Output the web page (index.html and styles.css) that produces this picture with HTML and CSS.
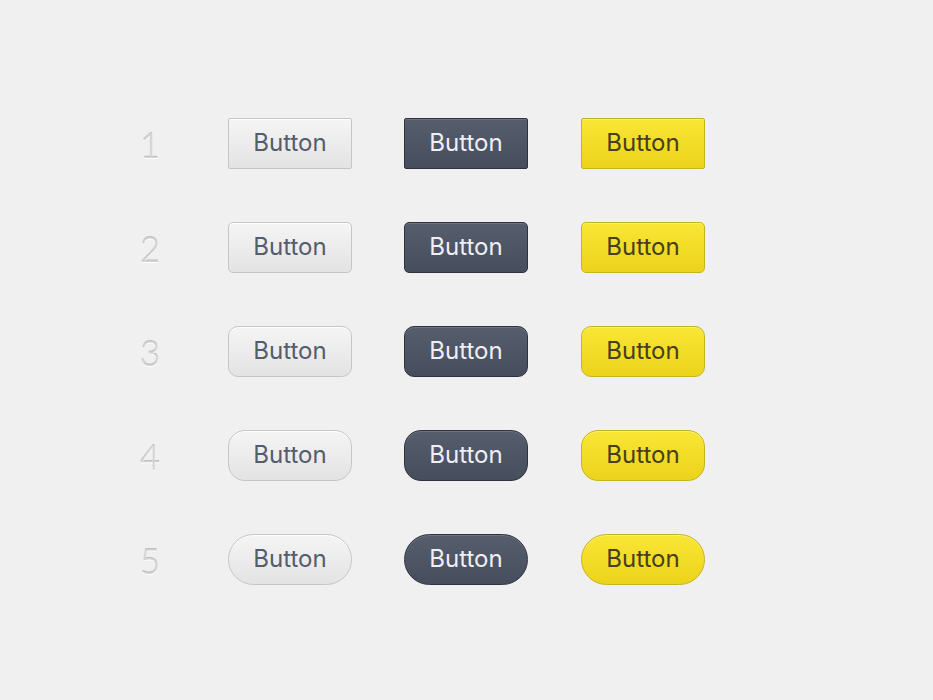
FILE: index.html
```html
<!DOCTYPE html>
<html lang="en">
<head>
    <meta charset="UTF-8">
    <title>Button Styles</title>
    <link rel="stylesheet" href="styles.css">
</head>
<body>

<div class="board">
    <div class="row r1">
        <span class="num">1</span>
        <button class="btn light">Button</button>
        <button class="btn dark">Button</button>
        <button class="btn yellow">Button</button>
    </div>
    <div class="row r2">
        <span class="num">2</span>
        <button class="btn light">Button</button>
        <button class="btn dark">Button</button>
        <button class="btn yellow">Button</button>
    </div>
    <div class="row r3">
        <span class="num">3</span>
        <button class="btn light">Button</button>
        <button class="btn dark">Button</button>
        <button class="btn yellow">Button</button>
    </div>
    <div class="row r4">
        <span class="num">4</span>
        <button class="btn light">Button</button>
        <button class="btn dark">Button</button>
        <button class="btn yellow">Button</button>
    </div>
    <div class="row r5">
        <span class="num">5</span>
        <button class="btn light">Button</button>
        <button class="btn dark">Button</button>
        <button class="btn yellow">Button</button>
    </div>
</div>

</body>
</html>
```

FILE: styles.css
```css
body, html {
    margin: 0;
    padding: 0;
    background: #f0f0f0;
    font-family: 'Inter', 'Open Sans', sans-serif;
}

.board {
    display: flex;
    flex-direction: column;
    gap: 53px;
    padding: 118px 0 0 120px;
}

.row {
    display: flex;
    align-items: center;
    height: 51px;
}

.num {
    width: 60px;
    margin-right: 48px;
    text-align: center;
    font-family: 'Lato', 'Open Sans', sans-serif;
    font-weight: 300;
    font-size: 35px;
    color: #d2d2d2;
    text-shadow: 0 1px 0 #fff, 0 -1px 0 #c0c0c0;
}

.btn {
    width: 124px;
    height: 51px;
    margin-right: 52px;
    padding: 0 0 2px;
    font-family: inherit;
    font-size: 24px;
    border-radius: 2px;
    cursor: pointer;
}

.light {
    color: #555c6c;
    background: linear-gradient(#f5f5f5, #e3e3e3);
    border: 1px solid #c6c6c6;
    box-shadow: inset 0 1px 0 #fff;
}

.dark {
    margin-right: 53px;
    color: #eef0f5;
    background: linear-gradient(#565e6e, #464d5c);
    border: 1px solid #2e333e;
    box-shadow: inset 0 1px 0 #6a7282;
}

.yellow {
    color: #443f1d;
    background: linear-gradient(#f9e634, #ecd31b);
    border: 1px solid #c8b21e;
    box-shadow: inset 0 1px 0 #fbef7a;
}

.r2 .btn { border-radius: 5px; }
.r3 .btn { border-radius: 10px; }
.r4 .btn { border-radius: 17px; }
.r5 .btn { border-radius: 26px; }
```
